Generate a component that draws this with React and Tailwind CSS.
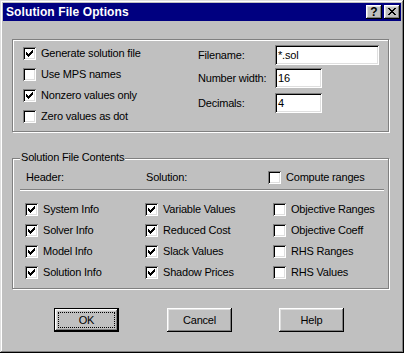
import React from 'react'

const sunken =
  'shadow-[inset_1px_1px_0_#808080,inset_-1px_-1px_0_#ffffff,inset_2px_2px_0_#000000,inset_-2px_-2px_0_#dfdfdf]'
const raised =
  'shadow-[inset_-1px_-1px_0_#000000,inset_1px_1px_0_#ffffff,inset_-2px_-2px_0_#808080,inset_2px_2px_0_#dfdfdf]'

function Check({ checked }) {
  return (
    <div className={`w-[13px] h-[13px] shrink-0 bg-white p-[3px] ${sunken}`}>
      {checked && (
        <svg width="7" height="7" viewBox="0 0 7 7" shapeRendering="crispEdges" className="block">
          <path
            fill="#000"
            d="M6 0h1v1h-1z M5 1h2v1h-2z M0 2h1v1h-1z M4 2h3v1h-3z M0 3h2v1h-2z M3 3h3v1h-3z M0 4h5v1h-5z M1 5h3v1h-3z M2 6h1v1h-1z"
          />
        </svg>
      )}
    </div>
  )
}

function CheckRow({ checked, label, className = '' }) {
  return (
    <div className={`flex items-center h-[13px] ${className}`}>
      <Check checked={checked} />
      <span className="ml-[5px] leading-none whitespace-nowrap">{label}</span>
    </div>
  )
}

function Field({ value, width }) {
  return (
    <div className={`h-[20px] bg-white flex items-center pl-[3px] ${sunken} ${width}`}>
      <span className="leading-none">{value}</span>
    </div>
  )
}

function Button({ label, isDefault, className = '' }) {
  if (isDefault) {
    return (
      <div className={`w-[65px] h-[24px] border border-black ${className}`}>
        <div className={`w-full h-full p-[3px] bg-[#c0c0c0] ${raised}`}>
          <div className="w-full h-full border border-dotted border-black flex items-center justify-center">
            <span className="leading-none">{label}</span>
          </div>
        </div>
      </div>
    )
  }
  return (
    <div className={`w-[65px] h-[24px] bg-[#c0c0c0] flex items-center justify-center ${raised} ${className}`}>
      <span className="leading-none">{label}</span>
    </div>
  )
}

export default function App() {
  return (
    <div
      className={`w-[404px] h-[353px] bg-[#c0c0c0] p-[3px] text-black text-[11px] tracking-[-0.2px] font-['Liberation_Sans',Arial,sans-serif] shadow-[inset_-1px_-1px_0_#000000,inset_1px_1px_0_#dfdfdf,inset_-2px_-2px_0_#808080,inset_2px_2px_0_#ffffff]`}
    >
      {/* title bar */}
      <div className="h-[18px] bg-[#000080] flex items-center pl-[3px] pr-[1px]">
        <span className="text-white font-bold text-[12px] tracking-[0.1px] leading-none">Solution File Options</span>
        <div className="ml-auto flex gap-[2px]">
          <div className={`w-[16px] h-[14px] bg-[#c0c0c0] flex items-center justify-center ${raised}`}>
            <span className="font-bold text-[12px] leading-none tracking-normal">?</span>
          </div>
          <div className={`w-[16px] h-[14px] bg-[#c0c0c0] pl-[4px] pt-[3px] ${raised}`}>
            <svg width="8" height="7" viewBox="0 0 8 7" shapeRendering="crispEdges" className="block">
              <path
                fill="#000"
                d="M0 0h2v1h-2z M6 0h2v1h-2z M1 1h2v1h-2z M5 1h2v1h-2z M2 2h4v1h-4z M3 3h2v1h-2z M2 4h4v1h-4z M1 5h2v1h-2z M5 5h2v1h-2z M0 6h2v1h-2z M6 6h2v1h-2z"
              />
            </svg>
          </div>
        </div>
      </div>

      <div className="px-[9px] pt-[18px]">
        {/* options group */}
        <div className="h-[93px] w-[377px] border border-[#808080] shadow-[inset_1px_1px_0_#ffffff,1px_1px_0_#ffffff] flex">
          <div className="w-[185px] pl-[10px] pt-[7px] flex flex-col gap-[8px]">
            <CheckRow checked label="Generate solution file" />
            <CheckRow label="Use MPS names" />
            <CheckRow checked label="Nonzero values only" />
            <CheckRow label="Zero values as dot" />
          </div>
          <div className="pt-[5px] flex flex-col">
            <div className="flex items-center">
              <span className="w-[77px] leading-none">Filename:</span>
              <Field value="*.sol" width="w-[104px]" />
            </div>
            <div className="flex items-center mt-[3px]">
              <span className="w-[77px] leading-none">Number width:</span>
              <Field value="16" width="w-[47px]" />
            </div>
            <div className="flex items-center mt-[5px]">
              <span className="w-[77px] leading-none">Decimals:</span>
              <Field value="4" width="w-[47px]" />
            </div>
          </div>
        </div>

        {/* contents group */}
        <div className="relative mt-[26px] h-[131px] w-[377px] border border-[#808080] shadow-[inset_1px_1px_0_#ffffff,1px_1px_0_#ffffff] pt-[12px] px-[7px]">
          <span className="absolute left-[7px] top-[-7px] bg-[#c0c0c0] px-[1px] leading-none">
            Solution File Contents
          </span>
          <div className="flex items-center h-[13px]">
            <span className="w-[120px] pl-[6px] leading-none">Header:</span>
            <span className="w-[128px] pl-[6px] leading-none">Solution:</span>
            <CheckRow label="Compute ranges" />
          </div>
          <div className="mt-[5px] h-[2px] w-[364px] border-t border-[#808080] border-b border-b-white" />
          <div className="mt-[12px] pl-[5px] flex">
            <div className="w-[120px] flex flex-col gap-[8px]">
              <CheckRow checked label="System Info" />
              <CheckRow checked label="Solver Info" />
              <CheckRow checked label="Model Info" />
              <CheckRow checked label="Solution Info" />
            </div>
            <div className="w-[128px] flex flex-col gap-[8px]">
              <CheckRow checked label="Variable Values" />
              <CheckRow checked label="Reduced Cost" />
              <CheckRow checked label="Slack Values" />
              <CheckRow checked label="Shadow Prices" />
            </div>
            <div className="flex flex-col gap-[8px]">
              <CheckRow label="Objective Ranges" />
              <CheckRow label="Objective Coeff" />
              <CheckRow label="RHS Ranges" />
              <CheckRow label="RHS Values" />
            </div>
          </div>
        </div>

        {/* buttons */}
        <div className="mt-[19px] pl-[42px] flex">
          <Button label="OK" isDefault />
          <Button label="Cancel" className="ml-[48px]" />
          <Button label="Help" className="ml-[47px]" />
        </div>
      </div>
    </div>
  )
}
